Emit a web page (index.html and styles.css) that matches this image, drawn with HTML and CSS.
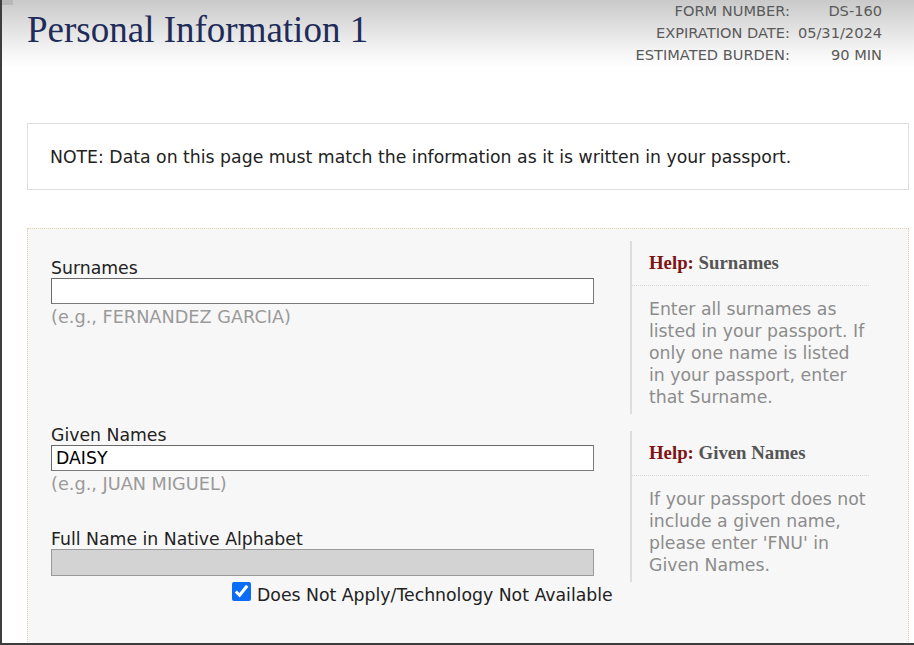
FILE: index.html
```html
<!DOCTYPE html>
<html lang="en">
<head>
<meta charset="utf-8">
<title>Personal Information 1</title>
<link rel="stylesheet" href="styles.css">
</head>
<body>
<div class="page">
  <span class="corner"></span>
  <header class="header">
    <h1 class="title">Personal Information 1</h1>
    <table class="meta">
      <tr><td class="meta-key">FORM NUMBER:</td><td class="meta-val">DS-160</td></tr>
      <tr><td class="meta-key">EXPIRATION DATE:</td><td class="meta-val">05/31/2024</td></tr>
      <tr><td class="meta-key">ESTIMATED BURDEN:</td><td class="meta-val">90 MIN</td></tr>
    </table>
  </header>

  <div class="note">NOTE: Data on this page must match the information as it is written in your passport.</div>

  <section class="panel">
    <div class="fields">
      <div class="group group-surnames">
        <label class="label" for="surnames">Surnames</label>
        <input class="input" id="surnames" type="text" value="">
        <div class="hint">(e.g., FERNANDEZ GARCIA)</div>
      </div>
      <div class="group group-given">
        <label class="label" for="given">Given Names</label>
        <input class="input" id="given" type="text" value="DAISY">
        <div class="hint">(e.g., JUAN MIGUEL)</div>
      </div>
      <div class="group group-native">
        <label class="label" for="native">Full Name in Native Alphabet</label>
        <input class="input input-disabled" id="native" type="text" value="" disabled>
        <div class="check-row">
          <input class="check" id="na" type="checkbox" checked>
          <label class="check-label" for="na">Does Not Apply/Technology Not Available</label>
        </div>
      </div>
    </div>
    <aside class="helps">
      <div class="help help-first">
        <div class="help-head"><span class="help-tag">Help:</span> Surnames</div>
        <div class="help-body">Enter all surnames as listed in your passport. If only one name is listed in your passport, enter that Surname.</div>
      </div>
      <div class="help help-second">
        <div class="help-head"><span class="help-tag">Help:</span> Given Names</div>
        <div class="help-body">If your passport does not include a given name, please enter 'FNU' in Given Names.</div>
      </div>
    </aside>
  </section>
</div>
</body>
</html>
```

FILE: styles.css
```css
html, body {
  margin: 0;
  padding: 0;
  background: #ffffff;
}

body {
  font-family: "DejaVu Sans", Verdana, sans-serif;
  font-size: 17.3px;
  color: #222222;
}

.page {
  position: relative;
  height: 645px;
  box-sizing: border-box;
  border-left: 2px solid #3d3d3d;
  border-bottom: 2px solid #3d3d3d;
  overflow: hidden;
}

.corner {
  position: absolute;
  left: 0;
  top: 0;
  width: 11px;
  height: 5px;
  background: #b8b8b8;
}

.header {
  display: flex;
  justify-content: space-between;
  align-items: flex-start;
  height: 70px;
  background: linear-gradient(to bottom, #c9c9c9 0px, #f4f4f4 50px, #ffffff 68px);
}

.title {
  margin: 0;
  padding: 10px 0 0 25px;
  font-family: "Liberation Serif", "Times New Roman", serif;
  font-weight: normal;
  font-size: 37px;
  line-height: 40px;
  color: #1f2c5a;
}

.meta {
  margin-right: 32px;
  border-collapse: collapse;
  font-size: 14.6px;
  color: #5a5a5a;
}

.meta td {
  padding: 0;
  height: 22px;
  line-height: 22px;
  text-align: right;
  white-space: nowrap;
}

.meta-key {
  padding-right: 8px !important;
}

.note {
  margin: 53px 5px 0 25px;
  height: 65px;
  display: flex;
  align-items: center;
  padding: 0 22px;
  border: 1px solid #dedede;
  background: #ffffff;
  color: #222222;
  white-space: nowrap;
}

.panel {
  display: flex;
  align-items: flex-start;
  margin: 38px 5px 0 25px;
  padding: 12px 0 40px 23px;
  min-height: 420px;
  border: 1px dotted #e2cfae;
  background: #f7f7f7;
}

.fields {
  width: 543px;
  flex: none;
}

.group-surnames {
  padding-top: 18px;
}

.group-given {
  margin-top: 100px;
}

.group-native {
  margin-top: 37px;
}

.label {
  display: block;
  line-height: 18px;
  height: 18px;
  color: #222222;
  margin-bottom: 1px;
  white-space: nowrap;
}

.input {
  display: block;
  box-sizing: border-box;
  width: 543px;
  height: 26px;
  margin: 0;
  padding: 0 4px;
  border: 1px solid #7a7a7a;
  border-top-color: #6a6a6a;
  border-left-color: #6a6a6a;
  background: #ffffff;
  font-family: "DejaVu Sans", Verdana, sans-serif;
  font-size: 17.3px;
  color: #000000;
}

.input-disabled {
  height: 27px;
  background: #d3d3d3;
  border-color: #9a9a9a;
}

.hint {
  margin-top: 4px;
  line-height: 18px;
  font-size: 17.7px;
  color: #9a9a9a;
  white-space: nowrap;
}

.check-row {
  display: flex;
  align-items: flex-start;
  margin: 5px 0 0 181px;
  white-space: nowrap;
}

.check {
  flex: none;
  width: 19px;
  height: 19px;
  margin: 1px 6px 0 0;
  accent-color: #0b6df7;
}

.check-label {
  line-height: 22px;
  color: #222222;
  padding-top: 3px;
}

.helps {
  margin-left: 36px;
  width: 239px;
  flex: none;
}

.help {
  border-left: 2px solid #dddddd;
}

.help-second {
  margin-top: 17px;
}

.help-head {
  padding: 11px 0 11px 17px;
  line-height: 22px;
  font-family: "Liberation Serif", "Times New Roman", serif;
  font-weight: bold;
  font-size: 18.8px;
  color: #555555;
  border-bottom: 1px dotted #d8d8d8;
}

.help-tag {
  color: #7d1414;
}

.help-body {
  padding: 12px 0 6px 17px;
  line-height: 22px;
  color: #8c8c8c;
}
```
